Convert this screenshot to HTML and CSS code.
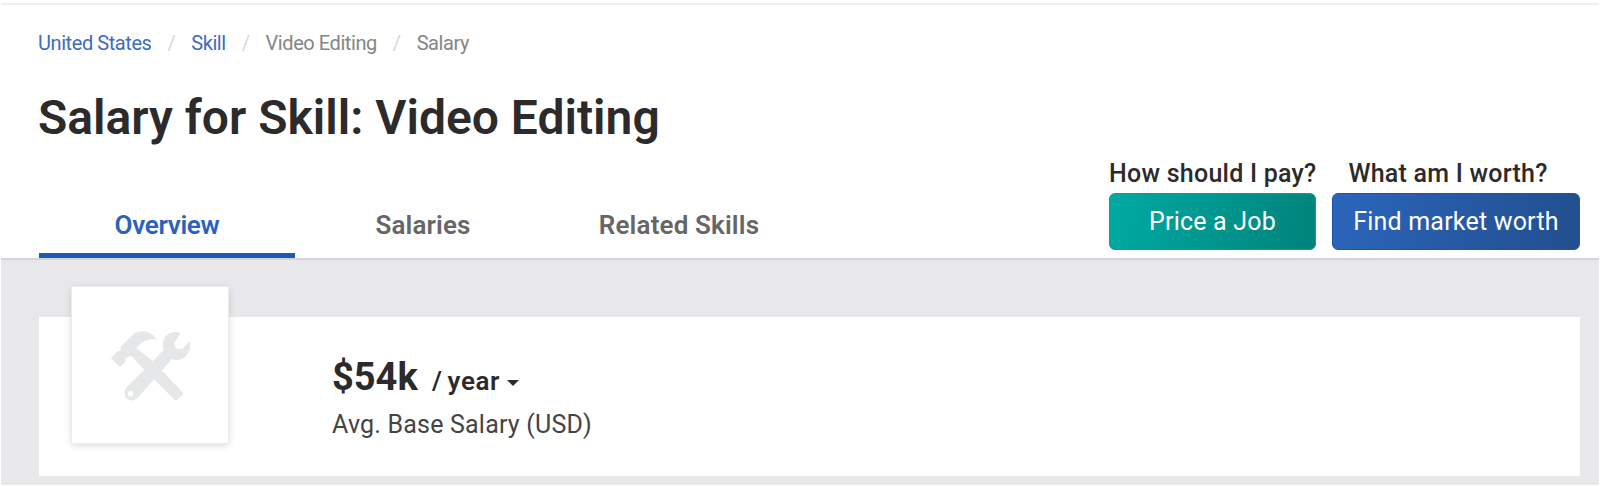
FILE: index.html
```
<!DOCTYPE html>
<html lang="en">
<head>
    <meta charset="UTF-8">
    <meta name="viewport" content="width=device-width, initial-scale=1.0">
    <title>Salary for Skill: Video Editing</title>
    <link rel="stylesheet" href="styles.css">
</head>
<body>
    <header class="page-header">
        <nav class="breadcrumb">
            <a class="crumb-country" href="#">United States</a>
            <span class="sep">/</span>
            <a class="crumb-type" href="#">Skill</a>
            <span class="sep">/</span>
            <span class="crumb-skill">Video Editing</span>
            <span class="sep">/</span>
            <span class="crumb-page">Salary</span>
        </nav>
        <h1>Salary for Skill: Video Editing</h1>
        <div class="header-bottom">
            <nav class="tabs">
                <a class="tab active" href="#">Overview</a>
                <a class="tab" href="#">Salaries</a>
                <a class="tab" href="#">Related Skills</a>
            </nav>
            <div class="actions">
                <div class="action action-job">
                    <div class="action-label">How should I pay?</div>
                    <button class="btn btn-job">Price a Job</button>
                </div>
                <div class="action action-worth">
                    <div class="action-label">What am I worth?</div>
                    <button class="btn btn-worth">Find market worth</button>
                </div>
            </div>
        </div>
    </header>

    <main>
        <section class="salary-card">
            <div class="skill-image">
                <svg class="tools-icon" viewBox="0 0 80 70" width="80" height="70">
                    <!-- wrench -->
                    <path fill-rule="evenodd" d="M69.700 2.300C63 -.500 56.500 1.500 53.500 7C51.500 11 51.500 15 52.500 19L34 38L15.500 56.500C12 61 13.500 66.500 17.500 68.700C20.500 70.200 24 69.500 26.500 67L42 49.500L61 28C67 30 72 28.500 75.500 24.500C79 20.500 80 16 78.800 10.700L70.700 18.300L65 17.500L63 12ZM19.500 60A2.800 2.800 0 1 1 19.500 65.600A2.800 2.800 0 1 1 19.500 60Z"/>
                    <!-- hammer -->
                    <path d="M0 27L6 20.500L9.800 19.500L9.700 15.700L22.300 3C28 -1.500 40 -1 45.700 8.300C36.500 7.500 31 10 25.500 17L34 24L36 25L50.700 39L72.500 62.500L65 70L34 39.500L20.500 25C18.500 24.500 16.500 26 14.500 27.500L14 31L9 36Z"/>
                </svg>
            </div>
            <div class="salary-info">
                <div class="salary-value">
                    <span class="amount">$54k</span>
                    <span class="period">/ year</span>
                    <span class="caret"></span>
                </div>
                <div class="salary-caption">Avg. Base Salary (USD)</div>
            </div>
        </section>
    </main>
</body>
</html>
```
FILE: styles.css
```
* {
    box-sizing: border-box;
}
body {
    margin: 0;
    height: 486px;
    display: flex;
    flex-direction: column;
    overflow: hidden;
    font-family: Roboto, "Liberation Sans", sans-serif;
    background-color: #fff;
    color: #2d2a2b;
}
a {
    color: #3d6cc0;
    text-decoration: none;
}
.page-header {
    height: 260px;
    flex: none;
    margin: 0 1px;
    padding: 3px 19px 0 38px;
    border-bottom: 2px solid #d5d5d9;
    background: linear-gradient(#efefef, #efefef) 0 3px / 100% 2px no-repeat;
}
.breadcrumb {
    display: flex;
    align-items: center;
    height: 24px;
    margin: 28px 0 0 -1px;
    font-size: 20px;
    letter-spacing: -0.43px;
    color: #858585;
    white-space: nowrap;
}
.sep {
    margin: 0 16px;
    color: #d6d6da;
}
h1 {
    margin: 35px 0 0 -1px;
    font-size: 48px;
    line-height: 56px;
    font-weight: 600;
    white-space: nowrap;
}
.header-bottom {
    display: flex;
    justify-content: space-between;
    margin-top: 12px;
}
.tabs {
    display: flex;
    align-items: flex-end;
    height: 100px;
}
.tab {
    width: 256px;
    height: 62px;
    line-height: 58px;
    text-align: center;
    font-size: 26px;
    font-weight: 600;
    letter-spacing: 0.15px;
    color: #666;
    white-space: nowrap;
}
.tab.active {
    color: #2b62bd;
    letter-spacing: -0.3px;
    border-bottom: 5px solid #1a5bb8;
}
.actions {
    display: flex;
    gap: 16px;
}
.action-job {
    width: 207px;
}
.action-worth {
    width: 248px;
}
.action-label {
    height: 35px;
    line-height: 31px;
    text-align: center;
    font-size: 25px;
    font-weight: 500;
    letter-spacing: 0.25px;
    white-space: nowrap;
}
.action-worth .action-label {
    padding-right: 16px;
}
.btn {
    display: block;
    width: 100%;
    height: 57px;
    padding: 0 0 1px;
    border: 1px solid #0a9c95;
    border-radius: 6px;
    font-family: inherit;
    font-size: 25px;
    letter-spacing: 0.2px;
    color: #fff;
    white-space: nowrap;
}
.btn-job {
    background: linear-gradient(100deg, #00aaa3, #00837b);
}
.btn-worth {
    background: linear-gradient(100deg, #2b65bb, #224f8e);
    border-color: #1c56ac;
}
main {
    height: 225px;
    margin: 0 1px;
    padding: 57px 19px 0 38px;
    background-color: #e8e8eb;
}
.salary-card {
    display: flex;
    height: 159px;
    padding-left: 33px;
    background-color: #fff;
}
.skill-image {
    display: flex;
    flex: none;
    width: 156px;
    height: 156px;
    margin-top: -30px;
    padding: 44px 0 0 39px;
    background-color: #fff;
    box-shadow: 0 0 0 1px #ececee, 0 2px 8px rgba(0,0,0,0.16);
}
.tools-icon {
    fill: #e6e7e8;
}
.salary-info {
    margin: 37px 0 0 104px;
}
.salary-value {
    display: flex;
    align-items: baseline;
    height: 46px;
    line-height: 46px;
    white-space: nowrap;
}
.amount {
    width: 100px;
    font-size: 38px;
    font-weight: 700;
}
.period {
    font-size: 26px;
    font-weight: 600;
    word-spacing: -2px;
    letter-spacing: 0.6px;
}
.caret {
    align-self: flex-end;
    margin: 0 0 14px 7px;
    border: 6px solid transparent;
    border-top-color: #2d2a2b;
    border-bottom: 0;
}
.salary-caption {
    margin-top: 10px;
    line-height: 30px;
    font-size: 25px;
    letter-spacing: 0.2px;
    color: #444;
    white-space: nowrap;
}
```
